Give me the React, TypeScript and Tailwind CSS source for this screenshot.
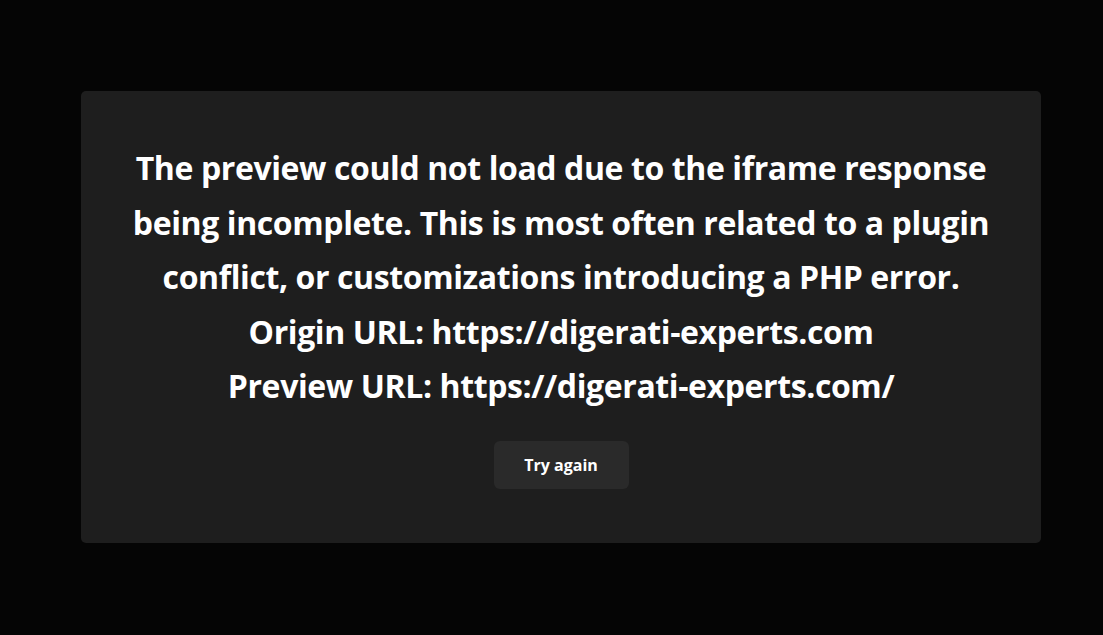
export default function App() {
  return (
    <div className="min-h-screen w-full bg-[#050505] pt-[91px]" style={{ fontFamily: '"Open Sans", "Noto Sans", sans-serif' }}>
      <div className="ml-[81px] flex h-[452px] w-[960px] flex-col items-center rounded-[5px] bg-[#1e1e1e] pt-[50px]">
        <p className="text-center text-[32px] font-bold leading-[54.5px] tracking-[-0.4px] text-white">
          The preview could not load due to the iframe response
          <br />
          being incomplete. This is most often related to a plugin
          <br />
          conflict, or customizations introducing a PHP error.
          <br />
          Origin URL: https://digerati-experts.com
          <br />
          Preview URL: https://digerati-experts.com/
        </p>
        <button className="mt-[27px] h-[48px] w-[135px] shrink-0 rounded-[6px] bg-[#2a2a2a] text-[16px] font-bold text-white">
          Try again
        </button>
      </div>
    </div>
  );
}
